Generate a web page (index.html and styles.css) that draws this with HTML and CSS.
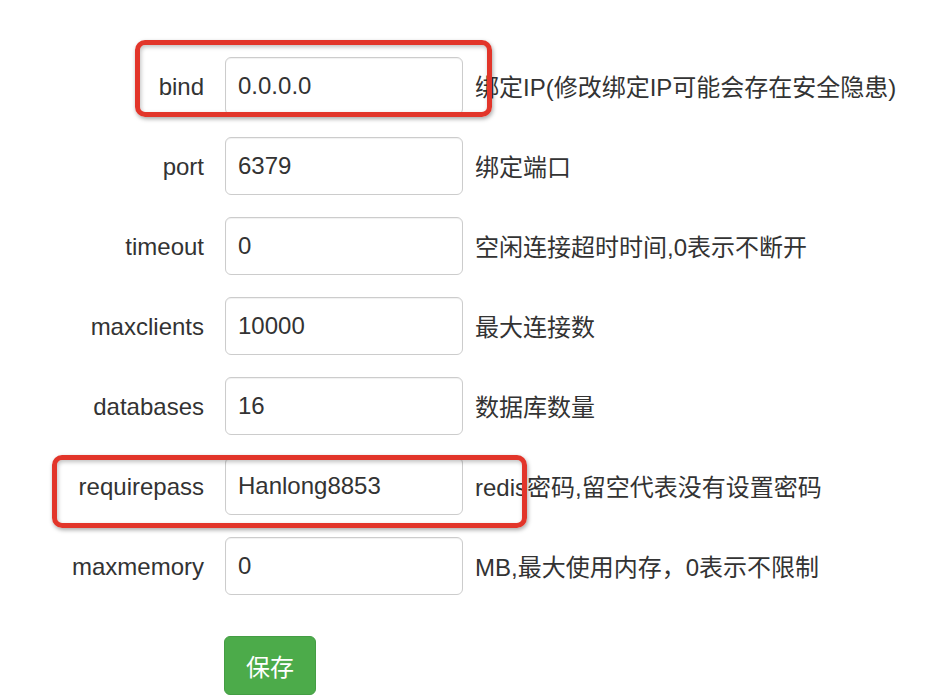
FILE: index.html
```html
<!DOCTYPE html>
<html lang="zh-CN">
<head>
<meta charset="utf-8">
<title>Redis 配置</title>
<link rel="stylesheet" href="styles.css">
</head>
<body>
<div class="page">
  <form class="form">
    <div class="row">
      <label class="label">bind</label>
      <input class="field" type="text" value="0.0.0.0">
      <span class="desc">绑定IP(修改绑定IP可能会存在安全隐患)</span>
    </div>
    <div class="row">
      <label class="label">port</label>
      <input class="field" type="text" value="6379">
      <span class="desc">绑定端口</span>
    </div>
    <div class="row">
      <label class="label">timeout</label>
      <input class="field" type="text" value="0">
      <span class="desc">空闲连接超时时间,0表示不断开</span>
    </div>
    <div class="row">
      <label class="label">maxclients</label>
      <input class="field" type="text" value="10000">
      <span class="desc">最大连接数</span>
    </div>
    <div class="row">
      <label class="label">databases</label>
      <input class="field" type="text" value="16">
      <span class="desc">数据库数量</span>
    </div>
    <div class="row">
      <label class="label">requirepass</label>
      <input class="field" type="text" value="Hanlong8853">
      <span class="desc">redis密码,留空代表没有设置密码</span>
    </div>
    <div class="row">
      <label class="label">maxmemory</label>
      <input class="field" type="text" value="0">
      <span class="desc">MB,最大使用内存，0表示不限制</span>
    </div>
    <div class="actions">
      <button class="btn-save" type="button">保存</button>
    </div>
  </form>
  <div class="mark mark-bind"></div>
  <div class="mark mark-pass"></div>
</div>
</body>
</html>
```
FILE: styles.css
```css
html, body {
  margin: 0;
  padding: 0;
  background: #ffffff;
}
body {
  font-family: "Liberation Sans", Arial, "Noto Sans CJK SC", sans-serif;
  color: #333333;
  font-size: 24px;
}
.page {
  position: relative;
  width: 932px;
  height: 696px;
  overflow: hidden;
}
.form {
  padding-top: 57px;
  display: flex;
  flex-direction: column;
  gap: 22px;
}
.row {
  display: flex;
  align-items: center;
  height: 58px;
}
.label {
  box-sizing: border-box;
  width: 225px;
  padding-right: 21px;
  padding-top: 1px;
  text-align: right;
  line-height: 1;
}
.field {
  box-sizing: border-box;
  width: 238px;
  height: 58px;
  border: 1.5px solid #cccccc;
  border-radius: 6px;
  padding: 0 12px;
  font-family: "Liberation Sans", Arial, "Noto Sans CJK SC", sans-serif;
  font-size: 24px;
  color: #333333;
  background: #fff;
  box-shadow: inset 0 1px 1px rgba(0,0,0,0.06);
  outline: none;
}
.desc {
  margin-left: 12px;
  margin-top: -2px;
  white-space: nowrap;
}
.actions {
  padding-left: 224px;
  margin-top: 19px;
}
.btn-save {
  width: 92px;
  height: 59px;
  border: 1px solid #449d44;
  border-radius: 6px;
  background: #4cab4a;
  color: #ffffff;
  font-family: "Noto Sans CJK SC", sans-serif;
  font-size: 24px;
  padding: 0;
}
.mark {
  position: absolute;
  box-sizing: border-box;
  border: 5px solid #e2352a;
  border-radius: 10px;
  box-shadow: 1px 2px 4px rgba(0,0,0,0.35), inset 1px 2px 4px rgba(0,0,0,0.25);
}
.mark-bind {
  left: 135px;
  top: 40px;
  width: 357px;
  height: 77px;
}
.mark-pass {
  left: 52px;
  top: 455px;
  width: 475px;
  height: 73px;
}
```
